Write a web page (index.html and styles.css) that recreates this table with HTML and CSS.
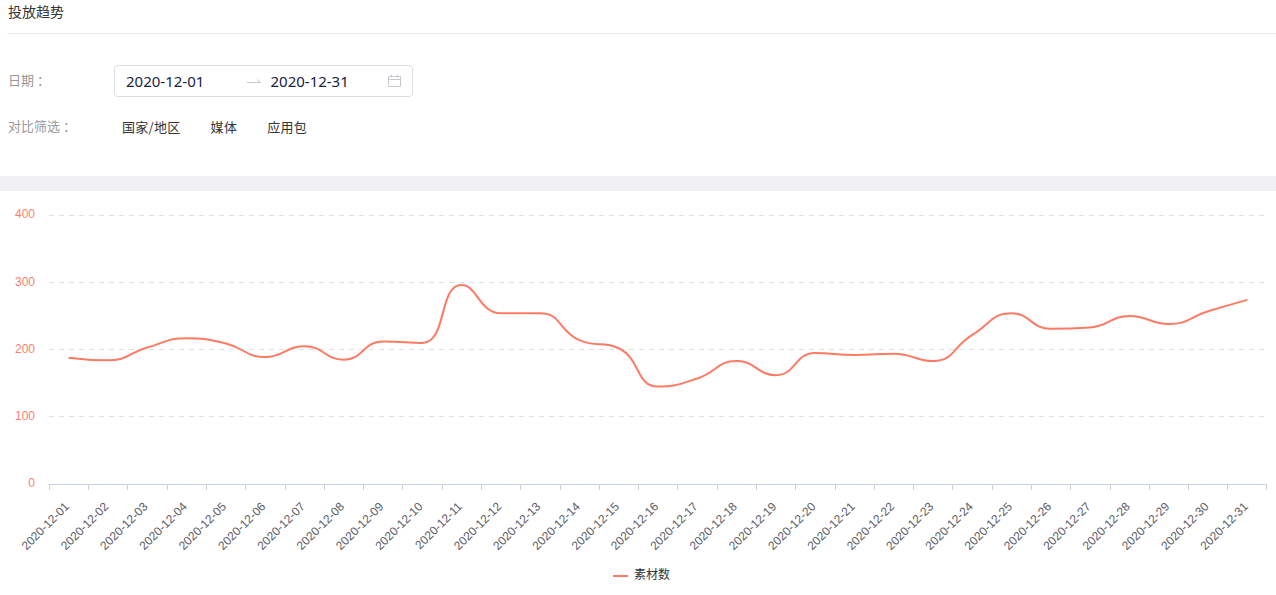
FILE: index.html
```html
<!DOCTYPE html>
<html lang="zh-CN">
<head>
<meta charset="utf-8">
<title>投放趋势</title>
<link rel="stylesheet" href="styles.css">
</head>
<body>
<div class="page">
  <section class="top">
    <div class="header"><span class="title">投放趋势</span></div>
    <div class="form">
      <div class="row">
        <span class="label">日期<span class="colon">：</span></span>
        <div class="picker">
          <span class="date date-start">2020-12-01</span>
          <svg class="sep" width="14" height="8" viewBox="0 0 14 8"><path d="M0 6.5H13.5L10 3.5" fill="none" stroke="#c5c8ce" stroke-width="1"/></svg>
          <span class="date date-end">2020-12-31</span>
          <svg class="cal" width="13" height="13" viewBox="0 0 13 13"><path d="M0.5 2.5H12.5V12.5H0.5Z M0.5 5.5H12.5 M3.5 0.5V3.5 M9.5 0.5V3.5" fill="none" stroke="#c5c8ce" stroke-width="1"/></svg>
        </div>
      </div>
      <div class="row">
        <span class="label">对比筛选<span class="colon">：</span></span>
        <div class="opts">
          <span class="opt">国家/地区</span>
          <span class="opt">媒体</span>
          <span class="opt">应用包</span>
        </div>
      </div>
    </div>
  </section>
  <div class="band"></div>
  <section class="chart">
    <svg class="plot" width="1276" height="404" viewBox="0 191 1276 404">
      <g class="grid">
        <line x1="49" y1="215.5" x2="1267" y2="215.5"/>
        <line x1="49" y1="282.5" x2="1267" y2="282.5"/>
        <line x1="49" y1="349.5" x2="1267" y2="349.5"/>
        <line x1="49" y1="416.5" x2="1267" y2="416.5"/>
      </g>
      <g class="ylabels">
        <text x="35" y="215">400</text>
        <text x="35" y="283">300</text>
        <text x="35" y="350">200</text>
        <text x="35" y="417">100</text>
        <text x="35" y="484">0</text>
      </g>
      <line class="axis" x1="49" y1="484.5" x2="1267" y2="484.5"/>
      <path class="ticks" d="M49.5 484v6M88.5 484v6M127.5 484v6M167.5 484v6M206.5 484v6M245.5 484v6M285.5 484v6M324.5 484v6M363.5 484v6M402.5 484v6M442.5 484v6M481.5 484v6M520.5 484v6M560.5 484v6M599.5 484v6M638.5 484v6M677.5 484v6M717.5 484v6M756.5 484v6M795.5 484v6M835.5 484v6M874.5 484v6M913.5 484v6M952.5 484v6M992.5 484v6M1031.5 484v6M1070.5 484v6M1110.5 484v6M1149.5 484v6M1188.5 484v6M1227.5 484v6M1266.5 484v6"/>
      <g class="xlabels">
        <text transform="translate(67.6 505) rotate(-45)">2020-12-01</text>
        <text transform="translate(106.9 505) rotate(-45)">2020-12-02</text>
        <text transform="translate(146.2 505) rotate(-45)">2020-12-03</text>
        <text transform="translate(185.5 505) rotate(-45)">2020-12-04</text>
        <text transform="translate(224.8 505) rotate(-45)">2020-12-05</text>
        <text transform="translate(264.1 505) rotate(-45)">2020-12-06</text>
        <text transform="translate(303.4 505) rotate(-45)">2020-12-07</text>
        <text transform="translate(342.7 505) rotate(-45)">2020-12-08</text>
        <text transform="translate(382.0 505) rotate(-45)">2020-12-09</text>
        <text transform="translate(421.3 505) rotate(-45)">2020-12-10</text>
        <text transform="translate(460.6 505) rotate(-45)">2020-12-11</text>
        <text transform="translate(499.9 505) rotate(-45)">2020-12-12</text>
        <text transform="translate(539.1 505) rotate(-45)">2020-12-13</text>
        <text transform="translate(578.4 505) rotate(-45)">2020-12-14</text>
        <text transform="translate(617.7 505) rotate(-45)">2020-12-15</text>
        <text transform="translate(657.0 505) rotate(-45)">2020-12-16</text>
        <text transform="translate(696.3 505) rotate(-45)">2020-12-17</text>
        <text transform="translate(735.6 505) rotate(-45)">2020-12-18</text>
        <text transform="translate(774.9 505) rotate(-45)">2020-12-19</text>
        <text transform="translate(814.2 505) rotate(-45)">2020-12-20</text>
        <text transform="translate(853.5 505) rotate(-45)">2020-12-21</text>
        <text transform="translate(892.8 505) rotate(-45)">2020-12-22</text>
        <text transform="translate(932.1 505) rotate(-45)">2020-12-23</text>
        <text transform="translate(971.4 505) rotate(-45)">2020-12-24</text>
        <text transform="translate(1010.7 505) rotate(-45)">2020-12-25</text>
        <text transform="translate(1050.0 505) rotate(-45)">2020-12-26</text>
        <text transform="translate(1089.3 505) rotate(-45)">2020-12-27</text>
        <text transform="translate(1128.6 505) rotate(-45)">2020-12-28</text>
        <text transform="translate(1167.9 505) rotate(-45)">2020-12-29</text>
        <text transform="translate(1207.2 505) rotate(-45)">2020-12-30</text>
        <text transform="translate(1246.5 505) rotate(-45)">2020-12-31</text>
      </g>
      <path id="series" class="series" d=""/>
      <g class="legend">
        <line class="legend-line" x1="613" y1="576" x2="628" y2="576"/>
        <text x="634" y="576">素材数</text>
      </g>
    </svg>
  </section>
</div>
<script src="chart.js"></script>
</body>
</html>
```
FILE: styles.css
```css
html, body {
  margin: 0;
  padding: 0;
  background: #ffffff;
}
body {
  font-family: "Noto Sans", "Noto Sans CJK SC", sans-serif;
  color: #333333;
  width: 1276px;
  height: 595px;
  overflow: hidden;
}
.page {
  display: flex;
  flex-direction: column;
}
.top {
  padding-left: 7px;
  height: 176px;
  box-sizing: border-box;
}
.header {
  height: 34px;
  border-bottom: 1px solid #e8eaec;
  box-sizing: border-box;
  padding-left: 1px;
}
.title {
  display: block;
  font-family: "Noto Sans CJK SC", sans-serif;
  font-size: 14px;
  line-height: 23px;
  color: #333333;
}
.form {
  padding-top: 31px;
  padding-left: 1px;
  display: flex;
  flex-direction: column;
  gap: 14px;
}
.row {
  display: flex;
  align-items: center;
  height: 32px;
}
.label {
  width: 106px;
  flex: none;
  font-family: "Noto Sans CJK SC", sans-serif;
  font-size: 13px;
  line-height: 18px;
  margin-top: -2px;
  color: #999999;
}
.colon {
  font-family: "Noto Sans CJK TC", sans-serif;
  margin-left: 3px;
}
.picker {
  width: 299px;
  height: 32px;
  box-sizing: border-box;
  border: 1px solid #dcdee2;
  border-radius: 4px;
  display: flex;
  align-items: center;
  padding: 0 11px;
}
.date {
  font-family: "Noto Sans", sans-serif;
  font-size: 15px;
  color: #17233d;
  line-height: 30px;
}
.date-start {
  width: 122px;
}
.sep {
  flex: none;
  margin-right: 9px;
  margin-top: -2px;
}
.date-end {
  width: 118px;
}
.cal {
  flex: none;
  margin-top: -1px;
}
.opts {
  display: flex;
  gap: 30px;
  padding-left: 8px;
  margin-top: -2px;
}
.opt {
  font-family: "Noto Sans CJK SC", sans-serif;
  font-size: 13px;
  letter-spacing: 0.3px;
  color: #333333;
}
.band {
  height: 15px;
  background: #efeff4;
}
.chart {
  height: 404px;
}
.plot {
  display: block;
}
.grid line {
  stroke: #e0e0e0;
  stroke-width: 1;
  stroke-dasharray: 5 5;
}
.ylabels text {
  font-family: "Liberation Sans", sans-serif;
  font-size: 12px;
  fill: #fc7f72;
  text-anchor: end;
  dominant-baseline: middle;
}
.axis {
  stroke: #c6d1e6;
  stroke-width: 1;
}
.ticks {
  stroke: #c6d1e6;
  stroke-width: 1;
  fill: none;
}
.xlabels text {
  font-family: "Liberation Sans", sans-serif;
  font-size: 12px;
  fill: #5c5c66;
  text-anchor: end;
  dominant-baseline: middle;
}
.series {
  fill: none;
  stroke: #ff7a64;
  stroke-width: 2;
  stroke-linejoin: round;
}
.legend-line {
  stroke: #ff7a64;
  stroke-width: 2;
}
.legend text {
  font-family: "Noto Sans CJK SC", sans-serif;
  font-size: 12px;
  fill: #333333;
  dominant-baseline: middle;
}
```
FILE: chart.js
```js
(function () {
  var data = [188, 184, 203, 217, 209, 189, 205, 185, 212, 210, 296, 254, 254, 214, 202, 145, 157, 183, 162, 195, 192, 194, 183, 222, 254, 231, 233, 250, 238, 257, 274];
  var x0 = 49, x1 = 1267, yBase = 484, k = 0.672, smooth = 0.5;
  var step = (x1 - x0) / data.length;
  var pts = data.map(function (v, i) { return [x0 + step * (i + 0.5), yBase - v * k]; });
  var n = pts.length;
  function f(v) { return v.toFixed(2); }
  var d = 'M' + f(pts[0][0]) + ' ' + f(pts[0][1]);
  var cpx0 = pts[0][0], cpy0 = pts[0][1];
  var prevX = pts[0][0], prevY = pts[0][1];
  for (var i = 1; i < n; i++) {
    var x = pts[i][0], y = pts[i][1];
    var cpx1, cpy1, nextCpx0 = x, nextCpy0 = y;
    if (i === n - 1) {
      cpx1 = x; cpy1 = y;
    } else {
      var nextX = pts[i + 1][0], nextY = pts[i + 1][1];
      var vx = nextX - prevX, vy = nextY - prevY;
      var dx0 = x - prevX, dx1 = nextX - x, dy0 = y - prevY, dy1 = nextY - y;
      var lenPrev = Math.sqrt(dx0 * dx0 + dy0 * dy0);
      var lenNext = Math.sqrt(dx1 * dx1 + dy1 * dy1);
      var ratio = lenNext / (lenNext + lenPrev);
      nextCpx0 = x + vx * smooth * ratio;
      nextCpy0 = y + vy * smooth * ratio;
      nextCpx0 = Math.min(nextCpx0, Math.max(nextX, x));
      nextCpy0 = Math.min(nextCpy0, Math.max(nextY, y));
      nextCpx0 = Math.max(nextCpx0, Math.min(nextX, x));
      nextCpy0 = Math.max(nextCpy0, Math.min(nextY, y));
      vx = nextCpx0 - x; vy = nextCpy0 - y;
      cpx1 = x - vx * lenPrev / lenNext;
      cpy1 = y - vy * lenPrev / lenNext;
      cpx1 = Math.min(cpx1, Math.max(prevX, x));
      cpy1 = Math.min(cpy1, Math.max(prevY, y));
      cpx1 = Math.max(cpx1, Math.min(prevX, x));
      cpy1 = Math.max(cpy1, Math.min(prevY, y));
      vx = x - cpx1; vy = y - cpy1;
      nextCpx0 = x + vx * lenNext / lenPrev;
      nextCpy0 = y + vy * lenNext / lenPrev;
    }
    d += 'C' + f(cpx0) + ' ' + f(cpy0) + ' ' + f(cpx1) + ' ' + f(cpy1) + ' ' + f(x) + ' ' + f(y);
    cpx0 = nextCpx0; cpy0 = nextCpy0;
    prevX = x; prevY = y;
  }
  document.getElementById('series').setAttribute('d', d);
})();
```
